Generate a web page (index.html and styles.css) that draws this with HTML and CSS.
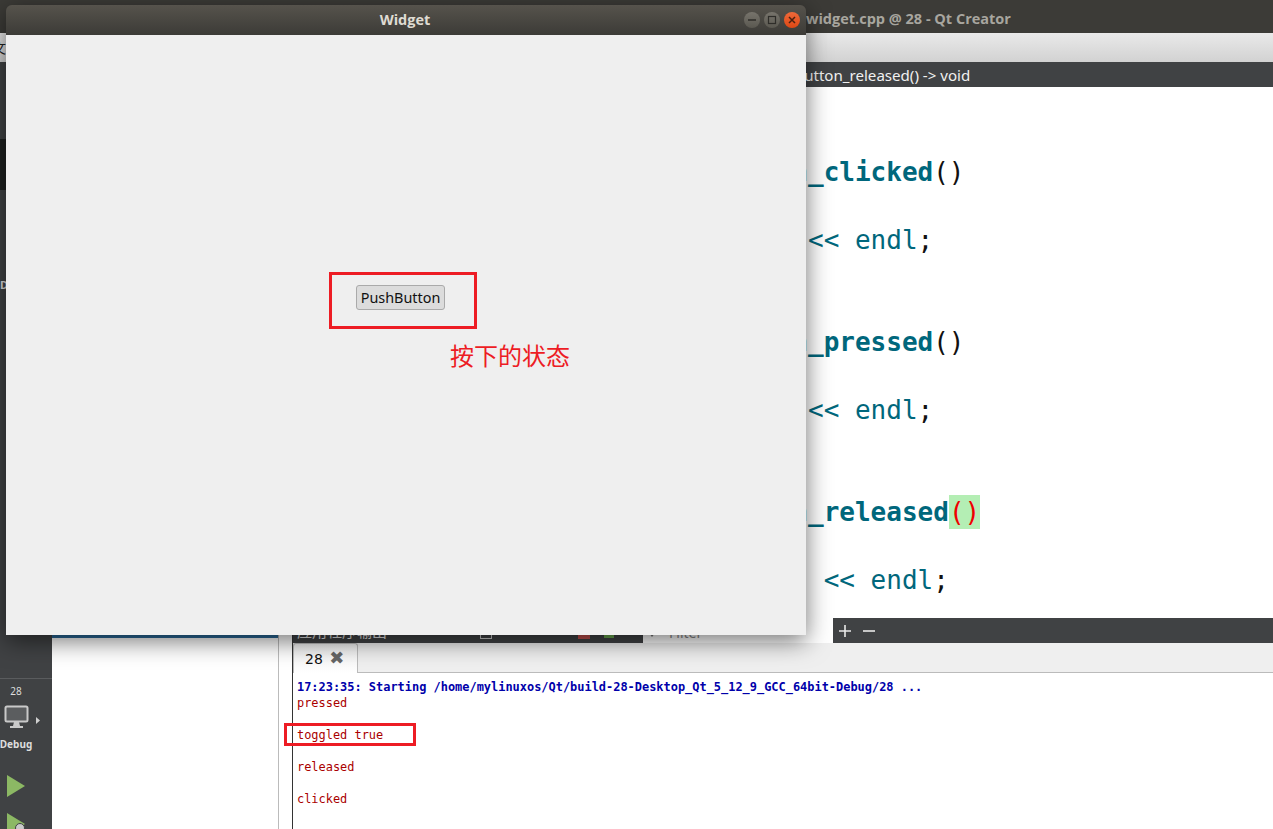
FILE: index.html
```html
<!DOCTYPE html>
<html lang="en">
<head>
<meta charset="UTF-8">
<meta name="viewport" content="width=device-width, initial-scale=1.0">
<title>widget.cpp @ 28 - Qt Creator</title>
<link rel="stylesheet" href="styles.css">
</head>
<body>
<!-- Qt Creator behind -->
<div class="ide">
    <div class="ide-title">widget.cpp @ 28 - Qt Creator</div>
    <div class="menu-bar"><span class="menu-glyph">文</span></div>
    <div class="ide-main">
        <div class="sidebar">
            <div class="mode-active"></div>
            <div class="mode-label">D</div>
            <div class="target">
                <div class="target-name">28</div>
                <div class="target-device">
                    <svg width="26" height="24" viewBox="0 0 26 24">
                        <rect x="1.5" y="1.5" width="22" height="15" rx="1.5" fill="#5b5d5f" stroke="#c9c9c9" stroke-width="2"/>
                        <path d="M10 17h5l1 4h3v2H6v-2h3z" fill="#c9c9c9"/>
                    </svg>
                    <svg class="target-arrow" width="4" height="7" viewBox="0 0 4 7"><path d="M0 0l4 3.5L0 7z" fill="#d0d0d0"/></svg>
                </div>
                <div class="target-mode">Debug</div>
            </div>
            <svg class="run-icon" width="18" height="22" viewBox="0 0 18 22"><path d="M0 0l18 11L0 22z" fill="#8cb864"/></svg>
            <svg class="debug-icon" width="18" height="22" viewBox="0 0 18 22">
                <path d="M0 0l18 11L0 22z" fill="#8cb864"/>
                <circle cx="13" cy="15" r="4.5" fill="#c9c9c9" stroke="#404244"/>
            </svg>
        </div>
        <div class="work">
            <div class="editor-bar">on_pushButton_released() -&gt; void</div>
            <pre class="editor"><span class="fn">void Widget::on_pushButton_clicked</span>()
{
        cout &lt;&lt; "clicked" <span class="kw">&lt;&lt; endl</span>;
}

<span class="fn">void Widget::on_pushButton_pressed</span>()
{
        cout &lt;&lt; "pressed" <span class="kw">&lt;&lt; endl</span>;
}

<span class="fn">void Widget::on_pushButton_released</span><span class="match">()</span>
{
        cout &lt;&lt; "released" <span class="kw">&lt;&lt; endl</span>;</pre>
            <div class="lower">
                <div class="side-panel"><div class="side-band"></div></div>
                <div class="output">
                    <div class="output-bar">
                        <span class="output-name">应用程序输出</span>
                        <span class="output-tools">
                            <i class="tool-box"></i>
                            <i class="tool-stop"></i>
                            <i class="tool-go"></i>
                        </span>
                        <span class="filter"><i class="filter-arrow"></i>Filter</span>
                        <span class="bar-btn">
                            <svg width="12" height="12" viewBox="0 0 12 12"><path d="M6 0v12M0 6h12" stroke="#e8e8e8" stroke-width="1.6"/></svg>
                        </span>
                        <span class="bar-btn">
                            <svg width="12" height="12" viewBox="0 0 12 12"><path d="M0 6h12" stroke="#e8e8e8" stroke-width="1.6"/></svg>
                        </span>
                    </div>
                    <div class="tab-row">
                        <div class="tab">28 <span class="tab-close">✖</span></div>
                    </div>
                    <pre class="log"><span class="log-start">17:23:35: Starting /home/mylinuxos/Qt/build-28-Desktop_Qt_5_12_9_GCC_64bit-Debug/28 ...</span>
pressed

toggled true

released

clicked</pre>
                </div>
            </div>
        </div>
    </div>
</div>

<!-- Widget window on top -->
<div class="window">
    <div class="window-title">
        <span class="window-name">Widget</span>
        <div class="window-controls">
            <span class="ctl">
                <svg width="10" height="10" viewBox="0 0 10 10"><path d="M1 5h8" stroke="#2e2d29" stroke-width="1.5"/></svg>
            </span>
            <span class="ctl">
                <svg width="10" height="10" viewBox="0 0 10 10"><rect x="1.5" y="1.5" width="7" height="7" fill="none" stroke="#2e2d29" stroke-width="1.2"/></svg>
            </span>
            <span class="ctl close">
                <svg width="10" height="10" viewBox="0 0 10 10"><path d="M2 2l6 6M8 2l-6 6" stroke="#4a2010" stroke-width="1.5"/></svg>
            </span>
        </div>
    </div>
    <div class="window-body">
        <button class="push-button">PushButton</button>
    </div>
</div>

<!-- red marks -->
<div class="mark mark-button"></div>
<div class="mark mark-log"></div>
<div class="note">按下的状态</div>
</body>
</html>
```

FILE: styles.css
```css
body {
    margin: 0;
    height: 100vh;
    overflow: hidden;
    background-color: #fff;
    font-family: "Noto Sans", sans-serif;
}
.ide {
    display: flex;
    flex-direction: column;
    height: 100vh;
}
.ide-title {
    height: 33px;
    flex: none;
    box-sizing: border-box;
    padding: 9px 0 0 806px;
    background-color: #3c3b37;
    color: #a8a69f;
    font-family: "Open Sans", sans-serif;
    font-size: 14.5px;
    font-weight: bold;
    line-height: 20px;
    white-space: nowrap;
}
.menu-bar {
    height: 29px;
    flex: none;
    background: linear-gradient(#e9e9e9, #d2d2d2);
    overflow: hidden;
}
.menu-glyph {
    font-family: "Noto Sans CJK SC", sans-serif;
    font-size: 14px;
    line-height: 29px;
    color: #222;
    margin-left: -8px;
}
.ide-main {
    flex: 1;
    display: flex;
    min-height: 0;
}
.sidebar {
    width: 52px;
    flex: none;
    display: flex;
    flex-direction: column;
    background-color: #404244;
    color: #ddd;
    overflow: hidden;
}
.mode-active {
    height: 51px;
    margin-top: 77px;
    background-color: #1f2120;
}
.mode-label {
    margin-top: 88px;
    font-size: 11px;
    font-weight: bold;
    line-height: 14px;
}
.target {
    margin-top: auto;
    border-top: 1px solid #5a5c5e;
    display: flex;
    flex-direction: column;
    align-items: center;
    padding-top: 5px;
}
.target-name {
    font-size: 10px;
    line-height: 14px;
    margin-left: -20px;
}
.target-device {
    display: flex;
    align-items: center;
    gap: 6px;
    margin: 7px 0 0 -8px;
    height: 24px;
}
.target-arrow {
    margin-top: 6px;
}
.target-mode {
    font-size: 10px;
    font-weight: bold;
    line-height: 14px;
    margin: 8px 0 0 -20px;
}
.run-icon {
    margin: 24px 0 0 7px;
    flex: none;
}
.debug-icon {
    margin: 16px 0 -6px 7px;
    flex: none;
}
.work {
    flex: 1;
    min-width: 0;
    display: flex;
    flex-direction: column;
}
.editor-bar {
    height: 25px;
    flex: none;
    box-sizing: border-box;
    padding-left: 682px;
    background-color: #404244;
    color: #f0f0f0;
    font-size: 15.1px;
    line-height: 27px;
    white-space: nowrap;
}
.editor {
    height: 531px;
    flex: none;
    box-sizing: border-box;
    margin: 0;
    padding: 68px 0 0 349px;
    overflow: hidden;
    background-color: #fff;
    color: #111;
    font-family: "DejaVu Sans Mono", monospace;
    font-size: 26px;
    line-height: 34px;
}
.fn {
    font-weight: bold;
    color: #00677c;
}
.kw {
    color: #00677c;
}
.match {
    display: inline-block;
    height: 34px;
    background-color: #b4eeb4;
    color: #f00000;
    vertical-align: top;
}
.lower {
    flex: 1;
    display: flex;
    min-height: 0;
}
.side-panel {
    width: 226px;
    flex: none;
    border-right: 1px solid #bbb;
    padding-top: 17px;
}
.side-band {
    height: 3px;
    background-color: #2a6a9a;
}
.output {
    flex: 1;
    min-width: 0;
    margin-left: 13px;
    border-left: 1px solid #333;
}
.output-bar {
    height: 25px;
    display: flex;
    align-items: center;
    background-color: #404244;
    color: #e8e8e8;
}
.output-name {
    width: 176px;
    box-sizing: border-box;
    padding-left: 4px;
    font-family: "Noto Sans CJK SC", sans-serif;
    font-size: 15px;
    line-height: 25px;
    flex: none;
}
.output-tools {
    width: 174px;
    height: 100%;
    flex: none;
    display: flex;
    align-items: center;
    gap: 14px;
    padding-top: 8px;
    box-sizing: border-box;
}
.tool-box {
    width: 12px;
    height: 8px;
    margin-left: 11px;
    border: 1px solid #ccc;
    box-sizing: border-box;
}
.tool-stop {
    width: 12px;
    height: 8px;
    margin-left: 72px;
    background-color: #c0504d;
}
.tool-go {
    width: 10px;
    height: 6px;
    background-color: #6aa84f;
}
.filter {
    width: 190px;
    height: 100%;
    flex: none;
    display: flex;
    align-items: center;
    gap: 14px;
    box-sizing: border-box;
    padding: 3px 0 0 6px;
    background-color: #fff;
    color: #888;
    font-size: 14px;
}
.filter-arrow {
    width: 0;
    height: 0;
    margin-top: 8px;
    border: 3px solid transparent;
    border-top: 4px solid #777;
}
.bar-btn {
    width: 24px;
    height: 12px;
    display: flex;
    justify-content: center;
}
.tab-row {
    height: 30px;
    box-sizing: border-box;
    background-color: #efefef;
    border-bottom: 1px solid #bbb;
}
.tab {
    width: 65px;
    height: 30px;
    box-sizing: border-box;
    padding-left: 11px;
    background: linear-gradient(#efefef, #fff);
    border: 1px solid #bbb;
    border-width: 1px 1px 0 1px;
    border-radius: 3px 3px 0 0;
    font-family: "DejaVu Sans", sans-serif;
    font-size: 14px;
    line-height: 30px;
    color: #111;
}
.tab-close {
    margin-left: 2px;
    color: #666;
    font-size: 18px;
    line-height: 20px;
}
.log {
    margin: 0;
    padding: 6px 0 0 4px;
    font-family: "DejaVu Sans Mono", monospace;
    font-size: 11.95px;
    line-height: 16px;
    color: #aa0000;
}
.log-start {
    color: #0000aa;
    font-weight: bold;
}
.window {
    position: absolute;
    left: 6px;
    top: 5px;
    width: 800px;
    height: 630px;
    display: flex;
    flex-direction: column;
    border-radius: 6px 6px 0 0;
    box-shadow: 0 6px 24px rgba(0, 0, 0, 0.55);
}
.window-title {
    height: 30px;
    flex: none;
    display: flex;
    align-items: center;
    justify-content: center;
    position: relative;
    box-sizing: border-box;
    padding: 0 2px 2px 0;
    border-radius: 6px 6px 0 0;
    background: linear-gradient(#56534c, #3c3b37);
}
.window-name {
    color: #dfdbd2;
    font-family: "Open Sans", sans-serif;
    font-size: 14.5px;
    font-weight: bold;
}
.window-controls {
    position: absolute;
    right: 6px;
    top: 7px;
    display: flex;
    gap: 4px;
}
.ctl {
    width: 16px;
    height: 16px;
    display: flex;
    align-items: center;
    justify-content: center;
    border-radius: 50%;
    background: linear-gradient(#77746c, #5a5850);
}
.ctl.close {
    background: linear-gradient(#f0693a, #dd4814);
}
.window-body {
    flex: 1;
    box-sizing: border-box;
    padding: 250px 0 0 350px;
    background-color: #efefef;
}
.push-button {
    display: block;
    width: 89px;
    height: 25px;
    padding: 0;
    background-color: #dcdcdc;
    border: 1px solid #aaa;
    border-radius: 3px;
    color: #111;
    font-family: "Noto Sans", sans-serif;
    font-size: 14.4px;
}
.mark {
    position: absolute;
    box-sizing: border-box;
    border: 3px solid #ed1c24;
}
.mark-button {
    left: 329px;
    top: 272px;
    width: 148px;
    height: 57px;
}
.mark-log {
    left: 284px;
    top: 723px;
    width: 132px;
    height: 23px;
}
.note {
    position: absolute;
    left: 450px;
    top: 337px;
    color: #ed1c24;
    font-family: "Noto Sans CJK SC", sans-serif;
    font-size: 24px;
    line-height: 36px;
    white-space: nowrap;
}
```
